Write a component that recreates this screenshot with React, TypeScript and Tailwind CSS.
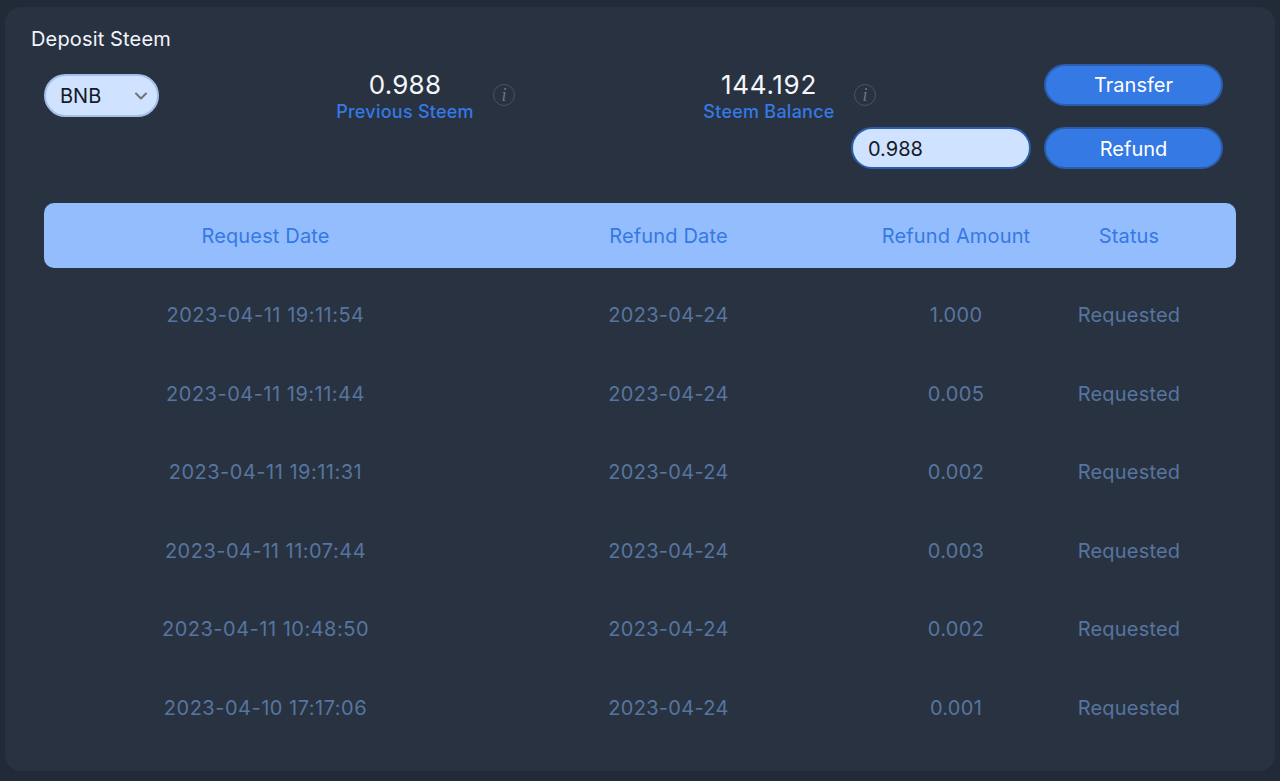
import { ChevronDown } from "lucide-react";

const rows = [
  { request: "2023-04-11 19:11:54", refund: "2023-04-24", amount: "1.000", status: "Requested" },
  { request: "2023-04-11 19:11:44", refund: "2023-04-24", amount: "0.005", status: "Requested" },
  { request: "2023-04-11 19:11:31", refund: "2023-04-24", amount: "0.002", status: "Requested" },
  { request: "2023-04-11 11:07:44", refund: "2023-04-24", amount: "0.003", status: "Requested" },
  { request: "2023-04-11 10:48:50", refund: "2023-04-24", amount: "0.002", status: "Requested" },
  { request: "2023-04-10 17:17:06", refund: "2023-04-24", amount: "0.001", status: "Requested" },
];

const cols = "grid grid-cols-[443px_363px_212px_134px] pr-[40px]";

function InfoIcon() {
  return (
    <div className="w-[22px] h-[22px] rounded-full border border-[#4b5260] flex items-center justify-center text-[#6f7580] text-[18px] italic leading-none font-['Liberation_Serif',serif]">
      i
    </div>
  );
}

function Stat({ value, label, valueClass }: { value: string; label: string; valueClass: string }) {
  return (
    <div className="flex flex-col items-center">
      <div className={`text-[26px] leading-[32px] text-[#f4f7fb] ${valueClass}`}>{value}</div>
      <div className="text-[18px] leading-[22px] font-medium tracking-[0.25px] text-[#3479e4]">{label}</div>
    </div>
  );
}

export default function App() {
  return (
    <div className="h-[781px] bg-[#232a37] pt-[7px] px-[5px] font-['Inter',sans-serif]">
      <div className="h-[764px] rounded-[16px] bg-[#293241] pt-[20px]">
        <h2 className="ml-[26px] text-[20px] leading-[24px] tracking-[0.15px] text-[#f1f5fb]">Deposit Steem</h2>

        <div className="flex items-start ml-[39px] mt-[13px]">
          <div className="mt-[10px] w-[115px] h-[43px] rounded-full bg-[#cfe2ff] border-2 border-[#a3bfe9] flex items-center justify-between pl-[14px] pr-[6px]">
            <span className="text-[20px] text-[#131a26]">BNB</span>
            <ChevronDown size={20} strokeWidth={2.4} className="text-[#6f7278]" />
          </div>

          <div className="ml-[177px] mt-[5px] w-[138px] flex justify-center">
            <Stat value="0.988" label="Previous Steem" valueClass="tracking-[0.2px]" />
          </div>
          <div className="ml-[19px] mt-[20px]">
            <InfoIcon />
          </div>

          <div className="ml-[188px] mt-[5px] w-[132px] flex justify-center">
            <Stat value="144.192" label="Steem Balance" valueClass="tracking-[0.7px]" />
          </div>

          <div className="ml-[16px] grid grid-cols-[180px_179px] gap-x-[13px] gap-y-[21px]">
            <div className="pl-[3px] pt-[20px]">
              <InfoIcon />
            </div>
            <button className="h-[42px] rounded-full bg-[#3479e4] border-2 border-[#2a5dab] text-white text-[20px]">
              Transfer
            </button>
            <input
              readOnly
              value="0.988"
              className="h-[42px] pt-[1px] w-full rounded-full bg-[#cfe2ff] border-2 border-[#2a5dab] pl-[15px] text-[20px] text-[#131a26] outline-none"
            />
            <button className="h-[42px] pt-[1px] rounded-full bg-[#3479e4] border-2 border-[#2a5dab] text-white text-[20px]">
              Refund
            </button>
          </div>
        </div>

        <div className="mx-[39px] mt-[34px]">
          <div className={`${cols} h-[65px] pt-[1px] items-center text-center rounded-[10px] bg-[#94bdfd] text-[20px] tracking-[0.15px] text-[#3479e4]`}>
            <div>Request Date</div>
            <div>Refund Date</div>
            <div>Refund Amount</div>
            <div>Status</div>
          </div>
          <div className="pt-[8px]">
            {rows.map((row) => (
              <div
                key={row.request}
                className={`${cols} h-[78.5px] items-center text-center text-[20px] text-[#56759f]`}
              >
                <div className="tracking-[0.5px]">{row.request}</div>
                <div className="tracking-[0.3px]">{row.refund}</div>
                <div className="tracking-[0.3px]">{row.amount}</div>
                <div className="tracking-[0.2px]">{row.status}</div>
              </div>
            ))}
          </div>
        </div>
      </div>
    </div>
  );
}
